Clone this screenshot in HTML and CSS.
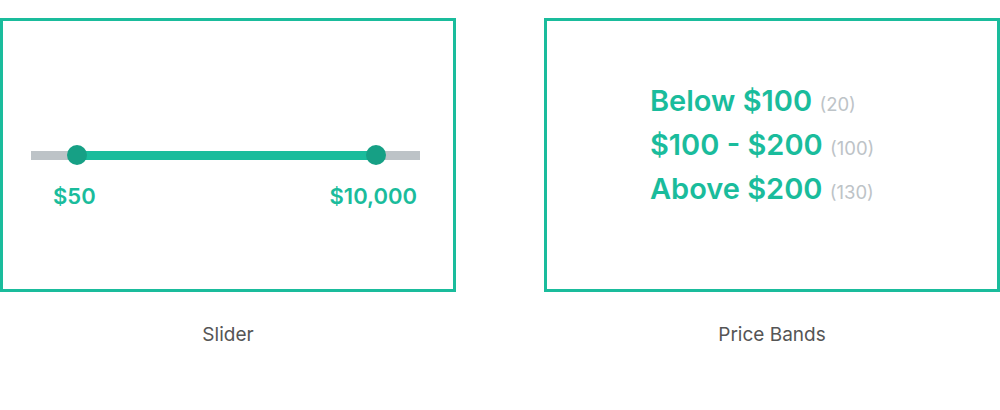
FILE: index.html
```html
<!DOCTYPE html>
<html lang="en">
<head>
<meta charset="utf-8">
<title>Price filter options</title>
<link rel="stylesheet" href="styles.css">
</head>
<body>
<main class="options">
  <section class="option">
    <div class="card card-slider">
      <div class="slider">
        <div class="track">
          <div class="range"></div>
          <span class="thumb thumb-min"></span>
          <span class="thumb thumb-max"></span>
        </div>
        <div class="slider-labels">
          <span class="value">$50</span>
          <span class="value">$10,000</span>
        </div>
      </div>
    </div>
    <p class="caption">Slider</p>
  </section>
  <section class="option">
    <div class="card card-bands">
      <ul class="bands">
        <li class="band">Below $100 <span class="count">(20)</span></li>
        <li class="band">$100 - $200 <span class="count">(100)</span></li>
        <li class="band">Above $200 <span class="count">(130)</span></li>
      </ul>
    </div>
    <p class="caption">Price Bands</p>
  </section>
</main>
</body>
</html>
```

FILE: styles.css
```css
html, body {
  margin: 0;
  padding: 0;
  background: #ffffff;
}

body {
  font-family: Inter, Lato, "Liberation Sans", sans-serif;
  width: 1000px;
  height: 410px;
  overflow: hidden;
}

.options {
  display: flex;
  gap: 88px;
  padding-top: 18px;
}

.option {
  width: 456px;
  display: flex;
  flex-direction: column;
}

.card {
  box-sizing: border-box;
  width: 456px;
  height: 274px;
  border: 3px solid #1abc9c;
}

/* Slider */
.slider {
  padding: 124px 33px 0 28px;
}

.track {
  position: relative;
  height: 20px;
}

.track::before {
  content: "";
  position: absolute;
  left: 0;
  right: 0;
  top: 6px;
  height: 9px;
  background: #bdc3c7;
}

.range {
  position: absolute;
  left: 46px;
  width: 299px;
  top: 6px;
  height: 9px;
  background: #1abc9c;
}

.thumb {
  position: absolute;
  top: 0;
  width: 20px;
  height: 20px;
  border-radius: 50%;
  background: #16a085;
}

.thumb-min { left: 36px; }
.thumb-max { left: 335px; }

.slider-labels {
  display: flex;
  justify-content: space-between;
  padding: 18px 3px 0 22px;
}

.value {
  font-size: 22px;
  line-height: 26px;
  font-weight: 600;
  color: #1abc9c;
}

/* Price bands */
.bands {
  list-style: none;
  margin: 0;
  padding: 58px 0 0 103px;
}

.band {
  font-size: 29px;
  line-height: 44px;
  font-weight: 600;
  color: #1abc9c;
  white-space: nowrap;
}

.count {
  font-size: 18.5px;
  line-height: 1;
  font-weight: 400;
  color: #bdc3c7;
}

.caption {
  margin: 32px 0 0;
  text-align: center;
  font-size: 19px;
  line-height: 22px;
  font-weight: 400;
  color: #555555;
}
```
